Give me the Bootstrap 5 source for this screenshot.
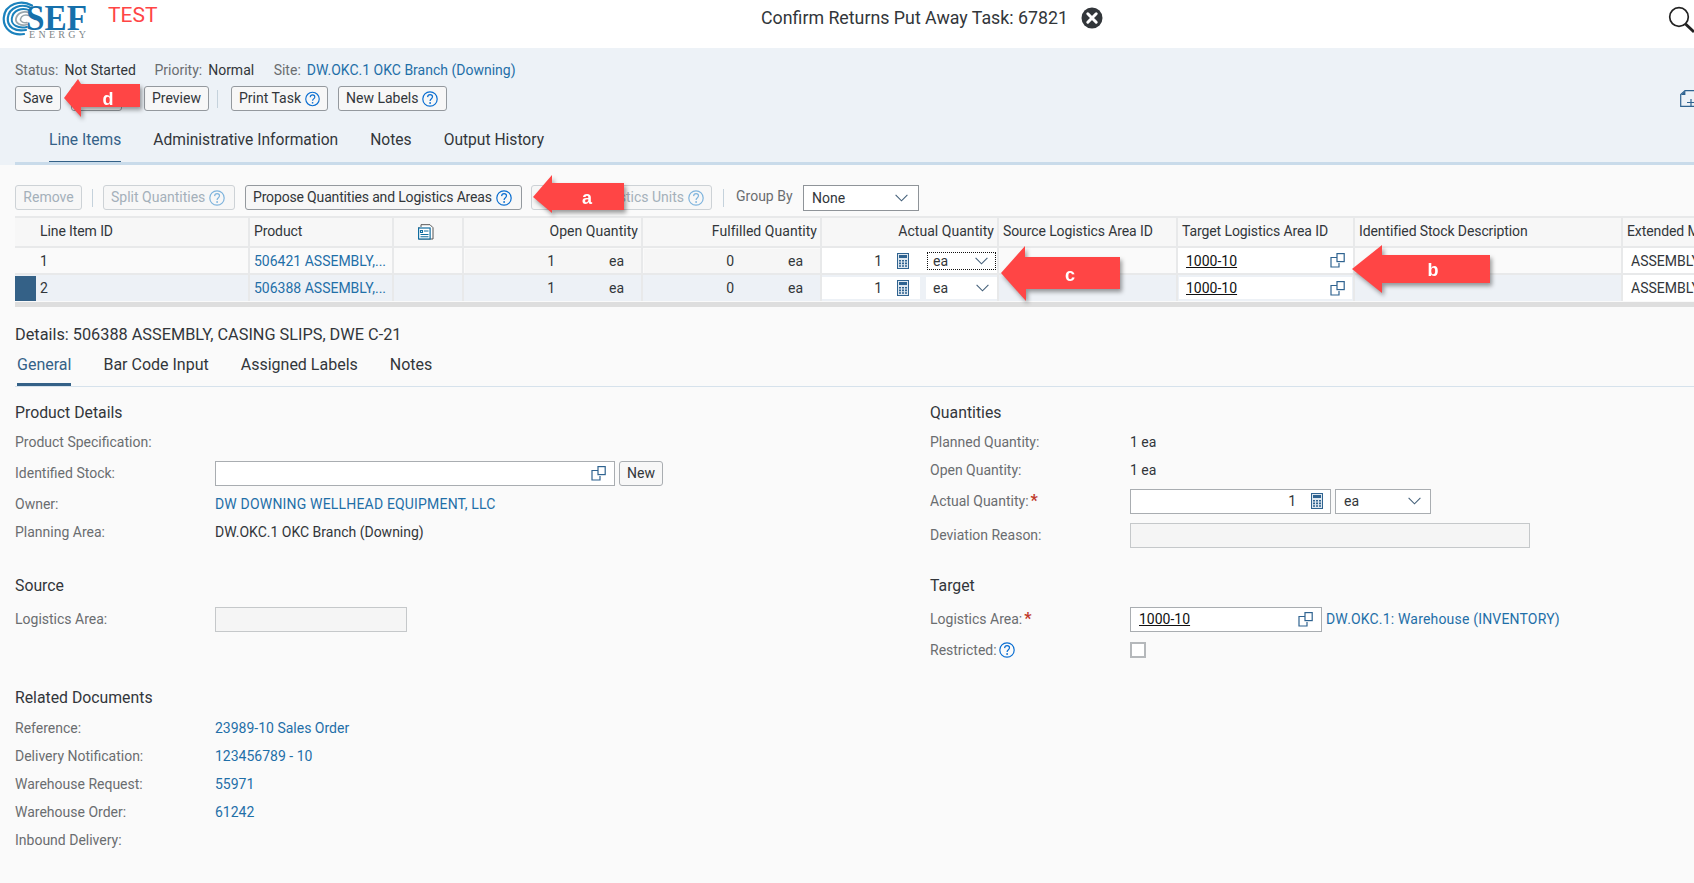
<!DOCTYPE html>
<html lang="en">
<head>
<meta charset="utf-8">
<title>Confirm Returns Put Away Task</title>
<link href="https://cdn.jsdelivr.net/npm/bootstrap@5.3.0/dist/css/bootstrap.min.css" rel="stylesheet">
<style>
html,body{height:883px;overflow:hidden}
body{position:relative;background:#fafafa;color:#32363a;font-family:Roboto,"Liberation Sans",sans-serif;font-size:14px;line-height:18px}
a{color:#1f6fa8;text-decoration:none}
.topbar{height:48px;background:#fff}
.logo-box{width:100px;height:48px;flex:none}
.test-tag{color:#ff4545;font-size:21px;line-height:22px;width:118px;padding:3px 0 0 8px;align-self:flex-start;margin-top:1px}
.page-title{font-size:17.8px;color:#32363a;line-height:36px;margin-left:543px}
.close-ic{margin-left:13px;margin-top:7px}
.search-ic{margin-left:auto;margin-top:6px}
.head-panel{height:117px;background:#edf2f7;position:relative}
.status-line{padding:13px 15px 0;height:38px;line-height:18px}
.lbl{color:#6a6d70}
.sect-gap{margin-left:15px}
.sect-gap-b{margin-left:16px}
.gap-s{margin-left:6px}
.sap-btn{height:25px;padding:0 7px;background:#f7f7f7;border:1px solid #94999e;border-radius:3px;color:#32363a;font-size:14px;line-height:23px;white-space:nowrap;display:inline-flex;align-items:center;gap:4px;flex:none}
.sap-btn.off{color:#a4b0ba;border-color:#cdd2d6}
.bar-sep{width:1px;height:18px;background:#c5d2dc;flex:none}
.sep-tool{margin:0 10px}
.sep-group{margin-left:11px}
.btn-row{padding-left:15px;height:25px;display:flex;align-items:center}
.w-save{width:46px;justify-content:center}
.w-hid{width:51px;margin-left:10px}
.w-prev{width:65px;margin-left:22px;justify-content:center}
.w-print{width:97px;margin-left:5px}
.w-labels{width:109px;margin-left:10px}
.w-remove{width:67px}
.w-split{width:132px}
.w-propose{width:277px;margin-left:10px;letter-spacing:-.16px}
.w-units{width:181px;margin-left:9px}
.head-side{position:absolute;right:0;top:42px}
.tabs-a{height:30px;margin-top:14px;padding-left:49px;display:flex;font-size:15.6px;line-height:30px;color:#32363a}
.tabs-a span+span{margin-left:32px}
.tab-on{color:#346187;position:relative}
.tab-on::after{content:"";position:absolute;left:0;right:0;height:3px;background:#346187}
.tabs-a .tab-on::after{top:36px}
.rule-a{position:absolute;left:15px;right:0;bottom:0;height:3px;background:#c9dbea}
.tool-row{height:25px;margin-top:20px;padding-left:15px;display:flex;align-items:center}
.group-lbl{color:#6a6d70;margin-left:12px;width:67px;padding-bottom:3px}
.sel-box{height:26px;background:#fff;border:1px solid #8f9499;border-radius:0;display:flex;align-items:center;justify-content:space-between;padding:0 10px 0 8px;flex:none}
.w-group{width:116px}
.grid-wrap{margin:6px 0 0 15px;width:1820px;height:86px}
.line-table{table-layout:fixed;width:1820px;margin:0;border-collapse:collapse;--bs-table-bg:transparent;color:#32363a}
.line-table th,.line-table td{padding:0;border:0;border-right:2px solid #e8e9ea;border-bottom:2px solid #e8e9ea;font-weight:400;vertical-align:middle;white-space:nowrap;overflow:hidden}
.line-table th{height:30px;background:#f7f7f7;border-top:2px solid #e8e9ea;padding:0 3px 2px 4px;color:#32363a;letter-spacing:-.1px}
.line-table th.th-r{text-align:right;letter-spacing:.04px}
.line-table td{height:27px}
.line-table .row-a td{background:#fafafa}
.line-table .row-b td{background:#edf1f6;border-bottom:0}
.line-table .row-a .white-cell,.line-table .row-b .white-cell{background:#fff}
.line-table .row-b td.sel-mark{background:linear-gradient(#346187,#346187) no-repeat 0 1px/21px 26px,#edf1f6}
.th-icon{text-align:center;padding-right:8px!important}
.id-cell{padding-left:25px!important}
.qty-cell{display:flex;align-items:center;height:24px;background:#f6f6f6;margin-left:1px}
.qty-n{width:90px;text-align:right;flex:none}
.qty-u{width:69px;text-align:right;flex:none}
.prod-cell{padding-left:4px!important}
.act-wrap{display:flex;align-items:center;height:25px}
.act-num{width:98px;height:22px;background:#fff;display:flex;align-items:center;justify-content:flex-end;padding-right:11px;gap:15px;flex:none}
.act-sel{margin-left:6px;width:73px;height:22px;background:#fff;display:flex;align-items:center;justify-content:space-between;padding:0 10px 0 7px;flex:none}
.act-sel.dotted{width:69px;height:18px;margin-left:7px;border:1px dotted #111;padding:0 7px 0 5px}
.target-cell{height:22px;background:#fff;display:flex;align-items:center;justify-content:space-between;padding:0 7px 0 7px;margin:0 1px}
.u-val{color:#111;text-decoration:underline}
.ext-cell{padding-left:8px!important}
.scroll-strip{height:5px;background:#dedede;margin-left:15px}
.det-title{margin:18px 0 0 15px;font-size:16.3px;line-height:20px;color:#32363a}
.tabs-b{display:flex;margin:10px 0 0 17px;height:22px;line-height:20px;font-size:16px;color:#32363a}
.tabs-b span+span{margin-left:32px}
.tabs-b .tab-on::after{top:28px}
.rule-b{height:1px;background:#d6e2ec;margin:9px 0 0 15px}
.form-area{display:flex;margin-top:12px}
.form-left{width:915px;padding-left:15px;flex:none}
.form-right{flex:1;padding-left:15px}
.sec-h{height:28px;font-size:15.8px;line-height:28px;margin-bottom:1px;color:#32363a}
.sec-h.mb2{margin-bottom:2px}
.sec-t{margin-top:20px}
.frow{height:28px;display:flex;align-items:center}
.frow-t{height:34px}
.frow>.lab{width:200px;color:#6a6d70;flex:none}
.blank-a{height:26px}
.blank-b{height:48px}
.box-in{height:25px;background:#fff;border:1px solid #a9adb1;display:flex;align-items:center;justify-content:space-between;padding:0 8px 0 8px;flex:none}
.box-off{background:#f5f5f5;border-color:#c5c8ca}
.w-ident{width:400px}
.w-src{width:192px}
.w-num{width:201px;padding-right:7px}
.w-unit{width:96px;margin-left:4px;padding-right:9px}
.w-dev{width:400px}
.w-target{width:192px}
.new-btn{margin-left:4px;width:44px;justify-content:center;background:#f7f7f7;border-color:#a9adb1}
.req{color:#c0392b;font-weight:700;font-size:16px;margin-left:2px;line-height:14px}
.chk{width:16px;height:16px;background:#fff;border:2px solid #b5b8bb;flex:none}
.num-side{display:flex;align-items:center;gap:15px}
.caps-link{letter-spacing:.18px}
.help-gap{gap:2px}
.help-soft{color:#7fb4dd}
.help-on{color:#0a6ed1}
.arrow-ov{position:absolute;overflow:visible;filter:drop-shadow(2px 3px 2px rgba(0,0,0,.38));z-index:5}
.arrow-ov text{font-family:"Liberation Sans",Arial,sans-serif;font-size:18px;font-weight:700;fill:#fff;text-anchor:middle}
.arr-d{left:0;top:0}
.arr-a{left:525px;top:170px}
.arr-c{left:995px;top:240px}
.arr-b{left:1346px;top:240px}
</style>
</head>
<body>
<svg width="0" height="0" class="d-block" aria-hidden="true">
  <defs>
    <symbol id="ic-help" viewBox="0 0 16 16"><circle cx="8" cy="8" r="7.2" fill="none" stroke="currentColor" stroke-width="1.2"/><path d="M5.6 6.100C5.700 4.500 6.700 3.600 8.100 3.600c1.400 0 2.400.9 2.400 2.200 0 1-.5 1.500-1.300 2.100-.8.6-1.100 1-1.100 2" fill="none" stroke="currentColor" stroke-width="1.200"/><circle cx="8.100" cy="12" r=".9" fill="currentColor"/></symbol>
    <symbol id="ic-copy" viewBox="0 0 15 15"><path d="M7.500 4.500H1v9.500h8v-4" fill="none" stroke="#2f6390" stroke-width="1.2"/><rect x="7" y=".6" width="7.2" height="8" fill="#fff" stroke="#2f6390" stroke-width="1.2"/></symbol>
    <symbol id="ic-calc" viewBox="0 0 12 16"><rect x=".5" y=".5" width="11" height="15" fill="#dfe8f0" stroke="#2f6390"/><rect x="2" y="2" width="8" height="3" fill="#2f6390"/><path d="M2 7h2v1.600H2zM5 7h2v1.600H5zM8 7h2v1.600H8zM2 9.600h2v1.600H2zM5 9.600h2v1.600H5zM8 9.600h2v1.600H8zM2 12.200h2v1.600H2zM5 12.200h2v1.600H5zM8 12.200h2v1.600H8z" fill="#2f6390"/></symbol>
    <symbol id="ic-chev" viewBox="0 0 13 8"><path d="M.6.8 6.500 6.800 12.400.8" fill="none" stroke="#44607a" stroke-width="1.100"/></symbol>
  </defs>
</svg>

<header class="topbar d-flex">
  <div class="logo-box">
    <svg width="100" height="48" viewBox="0 0 100 48">
      <g fill="none" stroke-linecap="round">
        <path d="M32 5.500C21 -1 5 4 3.800 17.500 2.800 29 13 36 24 34" stroke="#1b82bd" stroke-width="2.200"/>
        <path d="M31 8C22 3 9 7 7.800 18 7 27 15 32 26 30" stroke="#1b82bd" stroke-width="2.200"/>
        <path d="M30 10.500C22 7 13 10 11.800 18.500 11 25 18 29 27 27" stroke="#1b82bd" stroke-width="1.900"/>
        <path d="M30 13C24 10.500 17.500 12.500 16 18.500 15 23 21 26.500 27 24.500" stroke="#9aa6ad" stroke-width="1.800"/>
        <path d="M29 15.500C25 14 21.500 15.500 20.500 19 20 21.500 24 23.500 27 22.500" stroke="#9aa6ad" stroke-width="1.500"/>
      </g>
      <text x="26" y="30" font-family="Liberation Serif,serif" font-weight="700" font-size="35" fill="#1670ab" textLength="61" lengthAdjust="spacingAndGlyphs">SEF</text>
      <text x="29" y="38" font-family="Liberation Serif,serif" font-size="10" fill="#80868a" textLength="57">ENERGY</text>
    </svg>
  </div>
  <div class="test-tag">TEST</div>
  <div class="page-title">Confirm Returns Put Away Task: 67821</div>
  <svg class="close-ic" width="22" height="22" viewBox="0 0 22 22"><circle cx="11" cy="11" r="10.500" fill="#32363a"/><path d="M6.800 6.800 15.200 15.200M15.200 6.800 6.800 15.200" stroke="#fff" stroke-width="3" stroke-linecap="round"/></svg>
  <svg class="search-ic" width="26" height="28" viewBox="0 0 26 28"><circle cx="11" cy="11" r="9.300" fill="none" stroke="#222" stroke-width="1.700"/><path d="M17.500 18 26 26" stroke="#222" stroke-width="3"/></svg>
</header>

<section class="head-panel">
  <div class="status-line">
    <span class="lbl">Status:</span><span class="gap-s">Not Started</span>
    <span class="lbl sect-gap">Priority:</span><span class="gap-s">Normal</span>
    <span class="lbl sect-gap-b">Site:</span><a class="gap-s" href="#">DW.OKC.1 OKC Branch (Downing)</a>
  </div>
  <div class="btn-row">
    <button class="sap-btn w-save" type="button">Save</button>
    <button class="sap-btn w-hid" type="button"></button>
    <button class="sap-btn w-prev" type="button">Preview</button>
    <span class="bar-sep ms-2 me-2"></span>
    <button class="sap-btn w-print" type="button">Print Task <svg width="16" height="16" class="help-on"><use href="#ic-help"/></svg></button>
    <button class="sap-btn w-labels" type="button">New Labels <svg width="16" height="16" class="help-on"><use href="#ic-help"/></svg></button>
  </div>
  <svg class="head-side" width="14" height="17" viewBox="0 0 14 17"><path d="M14 .7H5L.7 4.600V16.300H14" fill="none" stroke="#2f6390" stroke-width="1.200"/><path d="M1 5h4.400V1z" fill="#2f6390"/><path d="M7 12.500h7M11 9v7" stroke="#2f6390" stroke-width="1.200"/></svg>
  <nav class="tabs-a">
    <span class="tab-on">Line Items</span>
    <span>Administrative Information</span>
    <span>Notes</span>
    <span>Output History</span>
  </nav>
  <div class="rule-a"></div>
</section>

<div class="tool-row">
  <button class="sap-btn off w-remove justify-content-center" type="button">Remove</button>
  <span class="bar-sep sep-tool"></span>
  <button class="sap-btn off w-split" type="button">Split Quantities <svg width="16" height="16" class="help-soft"><use href="#ic-help"/></svg></button>
  <button class="sap-btn w-propose" type="button">Propose Quantities and Logistics Areas <svg width="16" height="16" class="help-on"><use href="#ic-help"/></svg></button>
  <button class="sap-btn off w-units justify-content-end" type="button">Logistics Units <svg width="16" height="16" class="help-soft"><use href="#ic-help"/></svg></button>
  <span class="bar-sep sep-group"></span>
  <span class="group-lbl">Group By</span>
  <div class="sel-box w-group"><span>None</span><svg width="13" height="8"><use href="#ic-chev"/></svg></div>
</div>

<div class="grid-wrap">
  <table class="table line-table">
    <colgroup><col style="width:234px"><col style="width:144px"><col style="width:70px"><col style="width:179px"><col style="width:179px"><col style="width:177px"><col style="width:179px"><col style="width:177px"><col style="width:268px"><col style="width:213px"></colgroup>
    <thead>
      <tr>
        <th class="id-cell">Line Item ID</th>
        <th>Product</th>
        <th class="th-icon"><svg width="16" height="16" viewBox="0 0 16 16"><path d="M3 3V.7h9l3 3V15H1V3" fill="#fff" stroke="#555" stroke-width="1"/><rect x=".6" y="4" width="11.500" height="11" fill="#fff" stroke="#0f6c9f" stroke-width="1.200"/><path d="M2.500 6.500h2v2h-2zM6 7h4.500M2.500 10.500h8M2.500 12.700h8" stroke="#0f6c9f" stroke-width="1.100" fill="none"/></svg></th>
        <th class="th-r">Open Quantity</th>
        <th class="th-r">Fulfilled Quantity</th>
        <th class="th-r">Actual Quantity</th>
        <th>Source Logistics Area ID</th>
        <th>Target Logistics Area ID</th>
        <th>Identified Stock Description</th>
        <th>Extended Material</th>
      </tr>
    </thead>
    <tbody>
      <tr class="row-a">
        <td class="id-cell">1</td>
        <td class="prod-cell"><a href="#">506421 ASSEMBLY,...</a></td>
        <td></td>
        <td><div class="qty-cell"><span class="qty-n">1</span><span class="qty-u">ea</span></div></td>
        <td><div class="qty-cell"><span class="qty-n">0</span><span class="qty-u">ea</span></div></td>
        <td class="white-cell"><div class="act-wrap"><div class="act-num"><span>1</span><svg width="12" height="16"><use href="#ic-calc"/></svg></div><div class="act-sel dotted"><span>ea</span><svg width="13" height="8"><use href="#ic-chev"/></svg></div></div></td>
        <td></td>
        <td class="white-cell"><div class="target-cell"><span class="u-val">1000-10</span><svg width="15" height="15"><use href="#ic-copy"/></svg></div></td>
        <td></td>
        <td class="white-cell ext-cell">ASSEMBLY, CASING SLIPS</td>
      </tr>
      <tr class="row-b">
        <td class="id-cell sel-mark">2</td>
        <td class="prod-cell"><a href="#">506388 ASSEMBLY,...</a></td>
        <td></td>
        <td><div class="qty-cell bg-transparent"><span class="qty-n">1</span><span class="qty-u">ea</span></div></td>
        <td><div class="qty-cell bg-transparent"><span class="qty-n">0</span><span class="qty-u">ea</span></div></td>
        <td><div class="act-wrap"><div class="act-num"><span>1</span><svg width="12" height="16"><use href="#ic-calc"/></svg></div><div class="act-sel"><span>ea</span><svg width="13" height="8"><use href="#ic-chev"/></svg></div></div></td>
        <td></td>
        <td><div class="target-cell"><span class="u-val">1000-10</span><svg width="15" height="15"><use href="#ic-copy"/></svg></div></td>
        <td></td>
        <td class="white-cell ext-cell">ASSEMBLY, CASING SLIPS</td>
      </tr>
    </tbody>
  </table>
</div>
<div class="scroll-strip"></div>

<div class="det-title">Details: 506388 ASSEMBLY, CASING SLIPS, DWE C-21</div>
<nav class="tabs-b">
  <span class="tab-on">General</span>
  <span>Bar Code Input</span>
  <span>Assigned Labels</span>
  <span>Notes</span>
</nav>
<div class="rule-b"></div>

<div class="form-area">
  <div class="form-left">
    <div class="sec-h">Product Details</div>
    <div class="frow"><span class="lab">Product Specification:</span></div>
    <div class="frow frow-t"><span class="lab">Identified Stock:</span><div class="box-in w-ident"><span></span><svg width="15" height="15"><use href="#ic-copy"/></svg></div><button class="sap-btn new-btn" type="button">New</button></div>
    <div class="frow"><span class="lab">Owner:</span><a class="caps-link" href="#">DW DOWNING WELLHEAD EQUIPMENT, LLC</a></div>
    <div class="frow"><span class="lab">Planning Area:</span><span>DW.OKC.1 OKC Branch (Downing)</span></div>
    <div class="blank-a"></div>
    <div class="sec-h mb2">Source</div>
    <div class="frow frow-t"><span class="lab">Logistics Area:</span><div class="box-in box-off w-src"></div></div>
    <div class="blank-b"></div>
    <div class="sec-h mb2">Related Documents</div>
    <div class="frow"><span class="lab">Reference:</span><a href="#">23989-10 Sales Order</a></div>
    <div class="frow"><span class="lab">Delivery Notification:</span><a href="#">123456789 - 10</a></div>
    <div class="frow"><span class="lab">Warehouse Request:</span><a href="#">55971</a></div>
    <div class="frow"><span class="lab">Warehouse Order:</span><a href="#">61242</a></div>
    <div class="frow"><span class="lab">Inbound Delivery:</span></div>
  </div>
  <div class="form-right">
    <div class="sec-h">Quantities</div>
    <div class="frow"><span class="lab">Planned Quantity:</span><span>1 ea</span></div>
    <div class="frow"><span class="lab">Open Quantity:</span><span>1 ea</span></div>
    <div class="frow frow-t"><span class="lab">Actual Quantity:<span class="req">*</span></span><div class="box-in w-num"><span></span><div class="num-side"><span>1</span><svg width="12" height="16"><use href="#ic-calc"/></svg></div></div><div class="box-in w-unit"><span>ea</span><svg width="13" height="8"><use href="#ic-chev"/></svg></div></div>
    <div class="frow frow-t"><span class="lab">Deviation Reason:</span><div class="box-in box-off w-dev"></div></div>
    <div class="sec-h mb2 sec-t">Target</div>
    <div class="frow frow-t"><span class="lab">Logistics Area:<span class="req">*</span></span><div class="box-in w-target"><span class="u-val">1000-10</span><svg width="15" height="15"><use href="#ic-copy"/></svg></div><a href="#" class="ms-1 caps-link">DW.OKC.1: Warehouse (INVENTORY)</a></div>
    <div class="frow"><span class="lab d-flex align-items-center help-gap">Restricted: <svg width="16" height="16" class="help-on"><use href="#ic-help"/></svg></span><span class="chk"></span></div>
  </div>
</div>

<svg class="arrow-ov arr-d" width="160" height="130"><polygon points="64,98 78,79 81,84 140,84 140,107 81,107 81,117" fill="#ff4545"/><text x="108" y="105">d</text></svg>
<svg class="arrow-ov arr-a" width="110" height="50"><polygon points="8,27 27,5 27,13 99,13 99,40 27,40 27,43" fill="#ff4545"/><text x="62" y="34">a</text></svg>
<svg class="arrow-ov arr-c" width="130" height="65"><polygon points="6,33 30,6 30,17 125,17 125,49 31,49 31,61" fill="#ff4545"/><text x="75" y="41">c</text></svg>
<svg class="arrow-ov arr-b" width="150" height="58"><polygon points="6,29 36,5 36,15 144,15 144,43 36,43 36,53" fill="#ff4545"/><text x="87" y="36">b</text></svg>
<script src="https://cdn.jsdelivr.net/npm/bootstrap@5.3.0/dist/js/bootstrap.bundle.min.js"></script>
</body>
</html>
